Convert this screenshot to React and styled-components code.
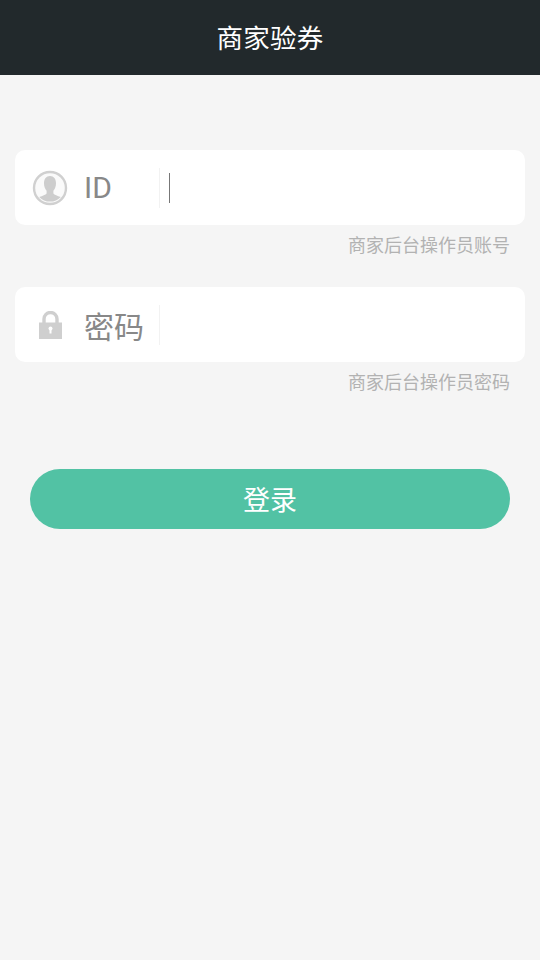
import React from 'react'
import styled, { createGlobalStyle } from 'styled-components'

const GlobalStyle = createGlobalStyle`
	html, body {
		margin: 0;
		padding: 0;
		background: #f5f5f5;
		font-family: Roboto, "Noto Sans CJK SC", sans-serif;
	}
`

const Page = styled.div`
	width: 540px;
	min-height: 960px;
	background: #f5f5f5;
`

const Header = styled.header`
	height: 75px;
	background: #22292c;
	color: #fff;
	font-size: 26.5px;
	letter-spacing: 0.3px;
	display: flex;
	align-items: center;
	justify-content: center;
	padding-bottom: 2px;
	box-sizing: border-box;
`

const Form = styled.div`
	padding: 75px 15px 0;
	display: flex;
	flex-direction: column;
`

const Field = styled.div`
	height: 75px;
	background: #fff;
	border-radius: 10px;
	display: flex;
	align-items: center;
`

const IconSlot = styled.div`
	width: 70px;
	display: flex;
	justify-content: center;
	flex-shrink: 0;
`

const Label = styled.span`
	width: 75px;
	margin-left: -1px;
	font-size: 30px;
	color: #888;
	flex-shrink: 0;
`

const Divider = styled.div`
	width: 1px;
	height: 40px;
	background: #f2f2f2;
	flex-shrink: 0;
`

const Caret = styled.div`
	width: 1px;
	height: 30px;
	margin-left: 9px;
	background: #777;
`

const Hint = styled.p`
	margin: 0 0 29px;
	height: 33px;
	line-height: 42px;
	padding-right: 15px;
	text-align: right;
	font-size: 18px;
	color: #b2b2b2;
`

const LoginButton = styled.button`
	height: 60px;
	margin: 45px 15px 0;
	border: none;
	border-radius: 30px;
	background: #52c2a4;
	color: #fff;
	font-family: inherit;
	font-size: 27px;
	padding: 0 0 2px;
`

const UserIcon = () => (
	<svg width="36" height="36" viewBox="0 0 36 36">
		<circle cx="18" cy="18" r="16" fill="#fafafa" stroke="#d0d0d0" strokeWidth="2.4" />
		<path
			d="M18 6c-3.8 0-6 3-6 7.2 0 3.2 1 5.8 2.6 7.6v2.6c-1 1.4-4 2.2-7.4 3.6a15 15 0 0 0 21.6 0c-3.4-1.4-6.4-2.2-7.4-3.6v-2.6c1.6-1.8 2.6-4.4 2.6-7.6 0-4.2-2.2-7.2-6-7.2z"
			fill="#cdcdcd"
		/>
	</svg>
)

const LockIcon = () => (
	<svg width="23" height="28" viewBox="0 0 23 28">
		<path d="M5 12V8a6.5 6.5 0 0 1 13 0v4" fill="none" stroke="#cfcfcf" strokeWidth="3.4" />
		<rect y="11.5" width="23" height="16.5" fill="#cfcfcf" />
		<circle cx="11.5" cy="17.5" r="2" fill="#fff" />
		<rect x="10.5" y="17.5" width="2" height="5" fill="#fff" />
	</svg>
)

const App = () => (
	<Page>
		<GlobalStyle />
		<Header>商家验券</Header>
		<Form>
			<Field>
				<IconSlot>
					<UserIcon />
				</IconSlot>
				<Label>ID</Label>
				<Divider />
				<Caret />
			</Field>
			<Hint>商家后台操作员账号</Hint>

			<Field>
				<IconSlot>
					<LockIcon />
				</IconSlot>
				<Label>密码</Label>
				<Divider />
			</Field>
			<Hint>商家后台操作员密码</Hint>

			<LoginButton type="button">登录</LoginButton>
		</Form>
	</Page>
)

export default App
